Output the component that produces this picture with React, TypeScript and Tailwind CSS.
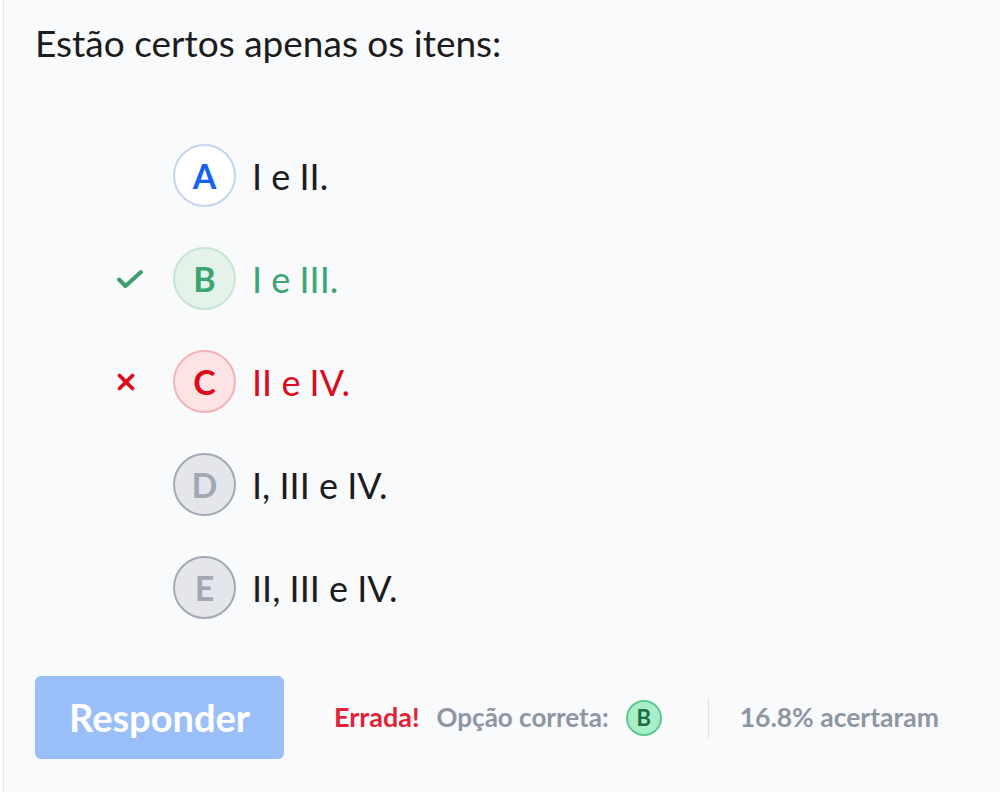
import React from 'react';

type Status = 'idle' | 'correct' | 'wrong' | 'muted';

interface Option {
  letter: string;
  text: string;
  status: Status;
}

const options: Option[] = [
  { letter: 'A', text: 'I e II.', status: 'idle' },
  { letter: 'B', text: 'I e III.', status: 'correct' },
  { letter: 'C', text: 'II e IV.', status: 'wrong' },
  { letter: 'D', text: 'I, III e IV.', status: 'muted' },
  { letter: 'E', text: 'II, III e IV.', status: 'muted' },
];

const circleStyles: Record<Status, string> = {
  idle: 'bg-white border-[#c3d5ef] text-[#1463ef]',
  correct: 'bg-[#e4f2ea] border-[#c8e4d3] text-[#3ba473]',
  wrong: 'bg-[#fde3e3] border-[#f3b4b6] text-[#dc0a1a]',
  muted: 'bg-[#e4e6eb] border-[#a3a8b3] text-[#a2a7b2]',
};

const textStyles: Record<Status, string> = {
  idle: 'text-[#1c1c1e]',
  correct: 'text-[#3ba473]',
  wrong: 'text-[#dc0a1a]',
  muted: 'text-[#1c1c1e]',
};

const OptionRow: React.FC<{ option: Option }> = ({ option }) => (
  <div className="flex items-center h-[103px]">
    <div className="w-[40px] ml-[75px] flex justify-center">
      {option.status === 'correct' && (
        <svg width="28" height="20" viewBox="0 0 28 20" fill="none">
          <path d="M3 10.5l6.5 6.5L25 3" stroke="#3c9e71" strokeWidth="4" strokeLinecap="round" strokeLinejoin="round" />
        </svg>
      )}
      {option.status === 'wrong' && (
        <svg width="18" height="18" viewBox="0 0 18 18" fill="none" className="-ml-[8px]">
          <path d="M2.5 2.5l13 13M15.5 2.5l-13 13" stroke="#dc0a1a" strokeWidth="3.8" strokeLinecap="round" />
        </svg>
      )}
    </div>
    <div
      className={`ml-[23px] w-[63px] h-[63px] rounded-full border-2 flex items-center justify-center text-[34px] font-bold ${circleStyles[option.status]}`}
    >
      {option.letter}
    </div>
    <span className={`ml-[16px] text-[36px] ${textStyles[option.status]}`}>{option.text}</span>
  </div>
);

export default function App() {
  return (
    <div className="bg-white pl-[3px] min-h-[792px] font-['Lato',sans-serif]">
      <div className="border-l border-[#e3e5ea] bg-[#f9fafb] min-h-[792px] pl-[31px] pt-[21px]">
        <h1 className="text-[37px] leading-[44px] text-[#1c1c1e]">Estão certos apenas os itens:</h1>

        <div className="mt-[59px]">
          {options.map((o) => (
            <OptionRow key={o.letter} option={o} />
          ))}
        </div>

        <div className="mt-[37px] flex items-center">
          <button className="w-[249px] h-[83px] rounded-md bg-[#9abef8] text-white text-[38px] font-bold">
            Responder
          </button>
          <span className="ml-[50px] text-[27px] font-bold text-[#e02437]">Errada!</span>
          <span className="ml-[17px] text-[26px] font-bold text-[#8f96a3]">Opção correta:</span>
          <span className="ml-[17px] w-[36px] h-[36px] rounded-full bg-[#a8efc7] border-2 border-[#5fc892] text-[#1c6c45] text-[22px] font-bold flex items-center justify-center">
            B
          </span>
          <span className="ml-[46px] w-px h-[40px] bg-[#e0e2e7]" />
          <span className="ml-[31px] text-[26.5px] font-bold text-[#8f96a3]">16.8% acertaram</span>
        </div>
      </div>
    </div>
  );
}
